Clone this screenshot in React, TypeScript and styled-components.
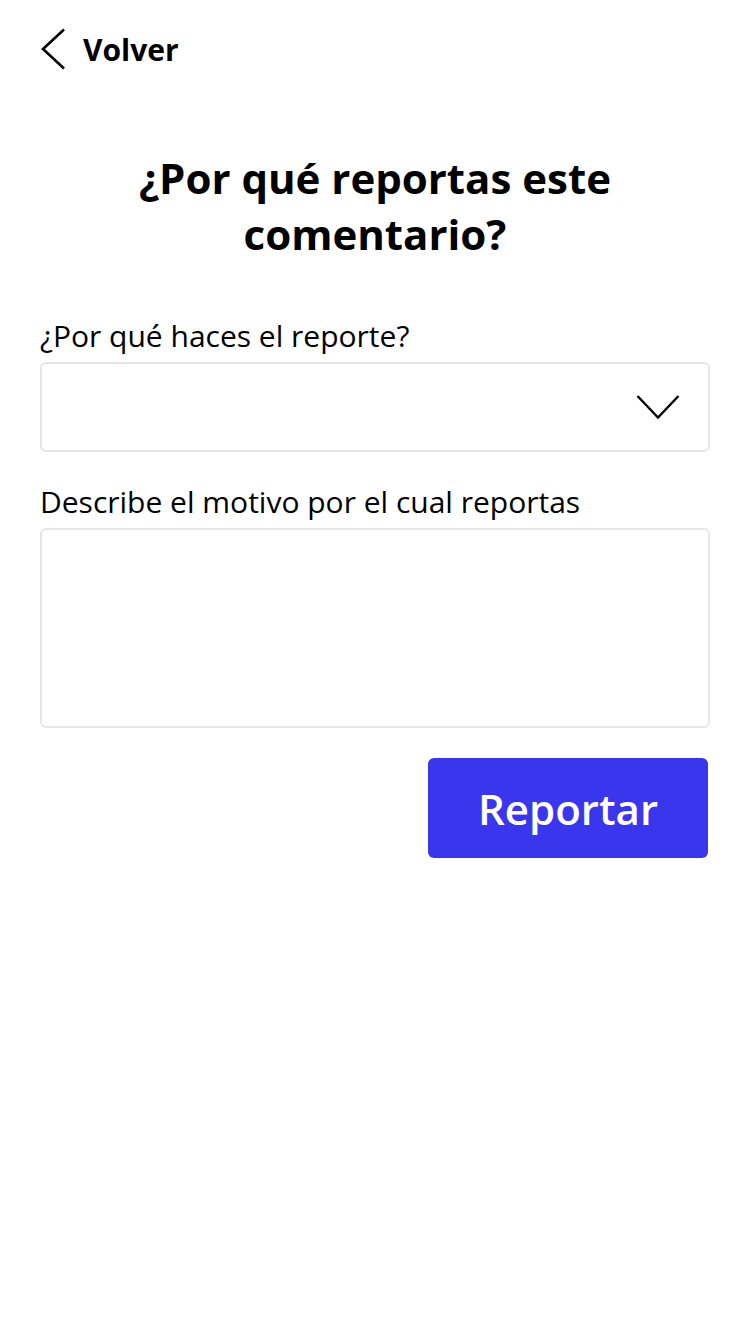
import React, { useState } from 'react';
import styled, { createGlobalStyle } from 'styled-components';

const GlobalStyle = createGlobalStyle`
  html, body {
    margin: 0;
    padding: 0;
    background: #ffffff;
  }
  body {
    font-family: 'Open Sans', 'Noto Sans', sans-serif;
    color: #000000;
  }
  * {
    box-sizing: border-box;
  }
`;

const Page = styled.main`
  width: 750px;
  min-height: 1334px;
  padding: 0 40px;
  display: flex;
  flex-direction: column;
`;

const BackButton = styled.button`
  display: flex;
  align-items: center;
  gap: 17px;
  padding: 0;
  margin-top: 28px;
  border: none;
  background: none;
  align-self: flex-start;
  font-family: inherit;
  font-size: 30px;
  font-weight: 700;
  color: #000;
  cursor: pointer;
`;

const Title = styled.h1`
  margin: 80px 0 0;
  font-size: 42px;
  line-height: 56px;
  font-weight: 700;
  text-align: center;
  padding: 0 80px;
`;

const Form = styled.form`
  display: flex;
  flex-direction: column;
  margin-top: 54px;
`;

const Field = styled.label`
  display: flex;
  flex-direction: column;
  gap: 6px;
  margin-bottom: 30px;
`;

const LabelText = styled.span`
  font-size: 30px;
  line-height: 40px;
  font-weight: 400;
`;

const SelectBox = styled.div`
  height: 90px;
  border: 2px solid #e6e6e6;
  border-radius: 6px;
  display: flex;
  align-items: center;
  justify-content: flex-end;
  padding-right: 28px;
`;

const TextArea = styled.textarea`
  height: 200px;
  border: 2px solid #e6e6e6;
  border-radius: 6px;
  resize: none;
  font-family: inherit;
  font-size: 30px;
  padding: 16px;
  outline: none;
`;

const Actions = styled.div`
  display: flex;
  justify-content: flex-end;
`;

const SubmitButton = styled.button`
  width: 280px;
  height: 100px;
  margin-right: 2px;
  background: #3a36ee;
  color: #ffffff;
  border: none;
  border-radius: 6px;
  font-family: inherit;
  font-size: 42px;
  font-weight: 600;
  cursor: pointer;
`;

const App = () => {
  const [reason, setReason] = useState('');

  return (
    <Page>
      <GlobalStyle />
      <BackButton type="button">
        <svg width="26" height="42" viewBox="0 0 26 42" fill="none">
          <path d="M24 1.5 L3 21 L24 40.5" stroke="#000" strokeWidth="2.6" />
        </svg>
        Volver
      </BackButton>
      <Title>¿Por qué reportas este comentario?</Title>
      <Form onSubmit={(e) => e.preventDefault()}>
        <Field>
          <LabelText>¿Por qué haces el reporte?</LabelText>
          <SelectBox>
            <svg width="44" height="26" viewBox="0 0 44 26" fill="none">
              <path d="M1.5 2 L22 23.5 L42.5 2" stroke="#000" strokeWidth="2.4" />
            </svg>
          </SelectBox>
        </Field>
        <Field>
          <LabelText>Describe el motivo por el cual reportas</LabelText>
          <TextArea value={reason} onChange={(e) => setReason(e.target.value)} />
        </Field>
        <Actions>
          <SubmitButton type="submit">Reportar</SubmitButton>
        </Actions>
      </Form>
    </Page>
  );
};

export default App;
